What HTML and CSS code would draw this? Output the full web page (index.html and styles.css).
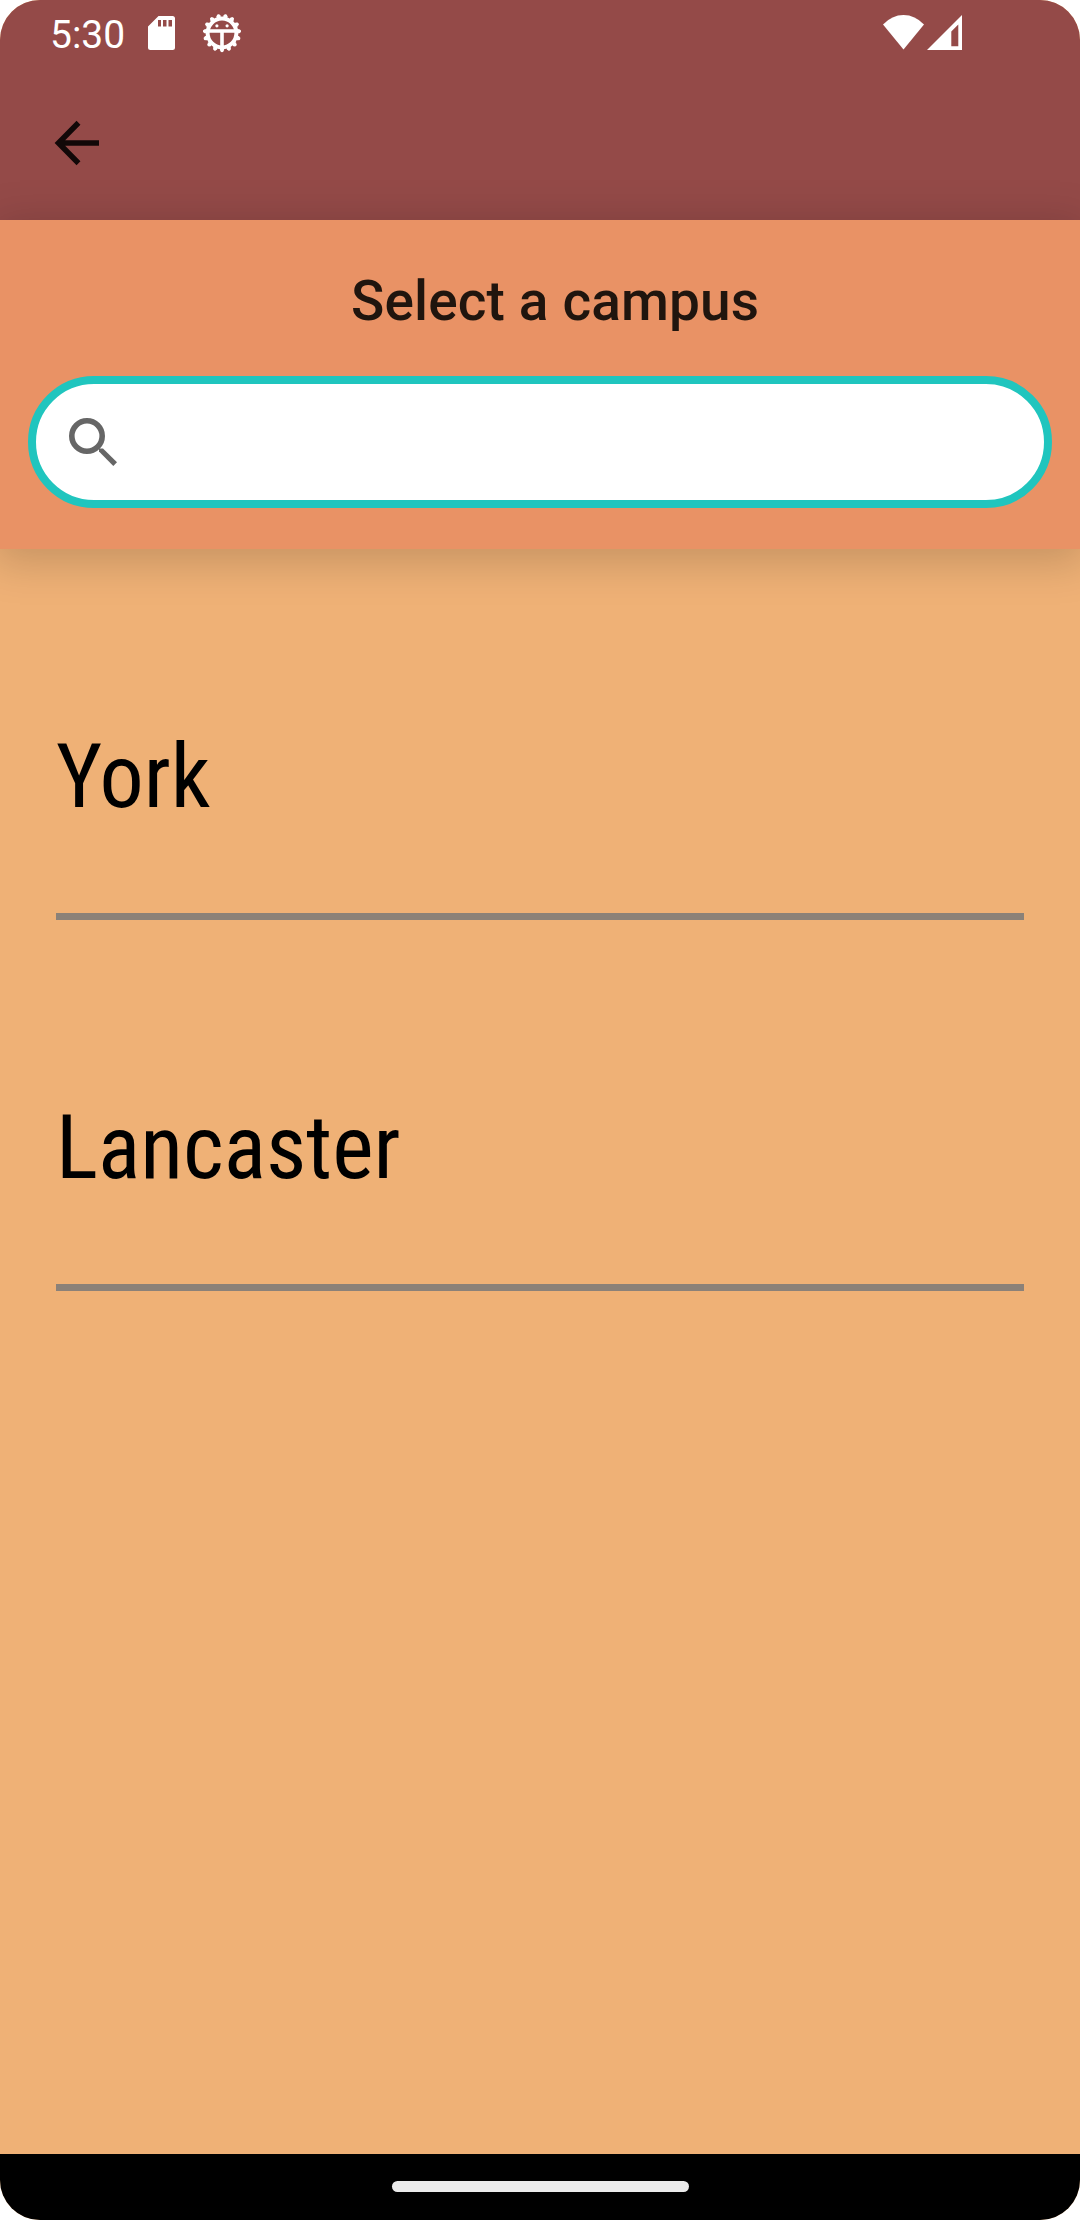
FILE: index.html
```html
<!DOCTYPE html>
<html lang="en">
<head>
<meta charset="utf-8">
<title>Select a campus</title>
<link rel="stylesheet" href="styles.css">
</head>
<body>
<div class="screen">
  <header class="top">
    <div class="status">
      <span class="time">5:30</span>
      <svg class="sd" viewBox="0 0 27 34"><path fill="#fff" fill-rule="evenodd" d="M10.500 0H24.500Q27 0 27 2.500V31.500Q27 34 24.500 34H2.500Q0 34 0 31.500V10.500ZM10 4V10.500H13V4ZM15 4V10.500H18.500V4ZM20.500 4V10.500H24V4Z"/></svg>
      <svg class="bug" viewBox="-20 -20 40 40">
        <circle r="14.400" fill="none" stroke="#fff" stroke-width="4"/>
        <circle r="16.500" fill="none" stroke="#fff" stroke-width="2.400" pathLength="150" stroke-dasharray="6 4" stroke-dashoffset="-34.500"/>
        <circle r="17.500" fill="none" stroke="#fff" stroke-width="3.400" stroke-linecap="round" pathLength="150" stroke-dasharray="0.100 9.900" stroke-dashoffset="-37.450"/>
        <path d="M-14-2H14M0-2V15" stroke="#fff" stroke-width="3.600"/>
        <circle cx="-5.100" cy="-7.200" r="1.600" fill="#fff"/><circle cx="5.100" cy="-7.200" r="1.600" fill="#fff"/>
      </svg>
      <span class="spacer"></span>
      <svg class="wifi" viewBox="0 0 41 35"><path fill="#fff" d="M0 9.500Q9 0 20.500 0T41 9.500L20.500 34.500Z"/></svg>
      <svg class="signal" viewBox="0 0 35 35"><path fill="#fff" fill-rule="evenodd" d="M35 0V35H0ZM31.300 9.500L24.300 16.500V31.300H31.300Z"/></svg>
    </div>
    <svg class="back" viewBox="0 0 44 44"><path d="M44 22H6M23.500 1.800L3.500 22L23.500 42.200" fill="none" stroke="#120808" stroke-width="5.500"/></svg>
  </header>
  <section class="finder">
    <h1 class="title">Select a campus</h1>
    <div class="search">
      <svg class="lens" viewBox="0 0 48 48"><circle cx="18" cy="18" r="15.200" fill="none" stroke="#666" stroke-width="5.600"/><path fill="#666" d="M30 33.500V30.500H34L48 44.300L44.300 48Z"/></svg>
    </div>
  </section>
  <main class="list">
    <div class="row"><span class="name">York</span></div>
    <div class="row"><span class="name">Lancaster</span></div>
  </main>
  <footer class="nav"><span class="pill"></span></footer>
</div>
</body>
</html>
```
FILE: styles.css
```css
body { margin: 0; background: #fff; font-family: Roboto, sans-serif; }
svg { display: block; flex: none; overflow: visible; }
.screen { display: flex; flex-direction: column; width: 1080px; height: 2220px; border-radius: 40px; overflow: hidden; background: #efb176; }
.top { height: 220px; background: #944a48; }
.status { display: flex; align-items: flex-start; height: 121px; padding: 0 118px 0 50px; }
.time { width: 98px; padding-top: 12px; font-size: 39px; line-height: 46px; color: #fff; }
.sd { width: 27px; height: 34px; margin-top: 16px; }
.bug { width: 40px; height: 40px; margin: 13px 0 0 27px; }
.spacer { flex: 1; }
.wifi { width: 41px; height: 35px; margin: 15px 3px 0 0; }
.signal { width: 35px; height: 35px; margin-top: 15px; }
.back { width: 44px; height: 44px; margin-left: 55px; }
.finder { display: flex; flex-direction: column; height: 329px; background: #e99265; box-shadow: 0 8px 40px 6px rgba(0, 0, 0, .17); z-index: 1; }
.title { margin: 49px 0 0 351px; height: 107px; font-size: 55px; font-weight: 500; line-height: 65px; letter-spacing: .13px; color: #20150e; white-space: nowrap; }
.search { display: flex; align-items: center; box-sizing: border-box; height: 132px; margin: 0 28px; padding-left: 33px; border: 8px solid #20c5be; border-radius: 66px; background: #fff; }
.lens { width: 48px; height: 48px; }
.list { flex: 1; padding: 0 56px; }
.row { display: flex; align-items: flex-start; box-sizing: border-box; height: 371px; padding-top: 176px; border-bottom: 7px solid #8b8178; }
.name { font-family: "Roboto Condensed", Roboto, sans-serif; font-stretch: 75%; font-size: 88.200px; line-height: 104px; color: #000; }
.nav { display: flex; justify-content: center; height: 66px; background: #000; }
.pill { width: 297px; height: 11px; margin-top: 27px; border-radius: 6px; background: #ebebeb; }
```
